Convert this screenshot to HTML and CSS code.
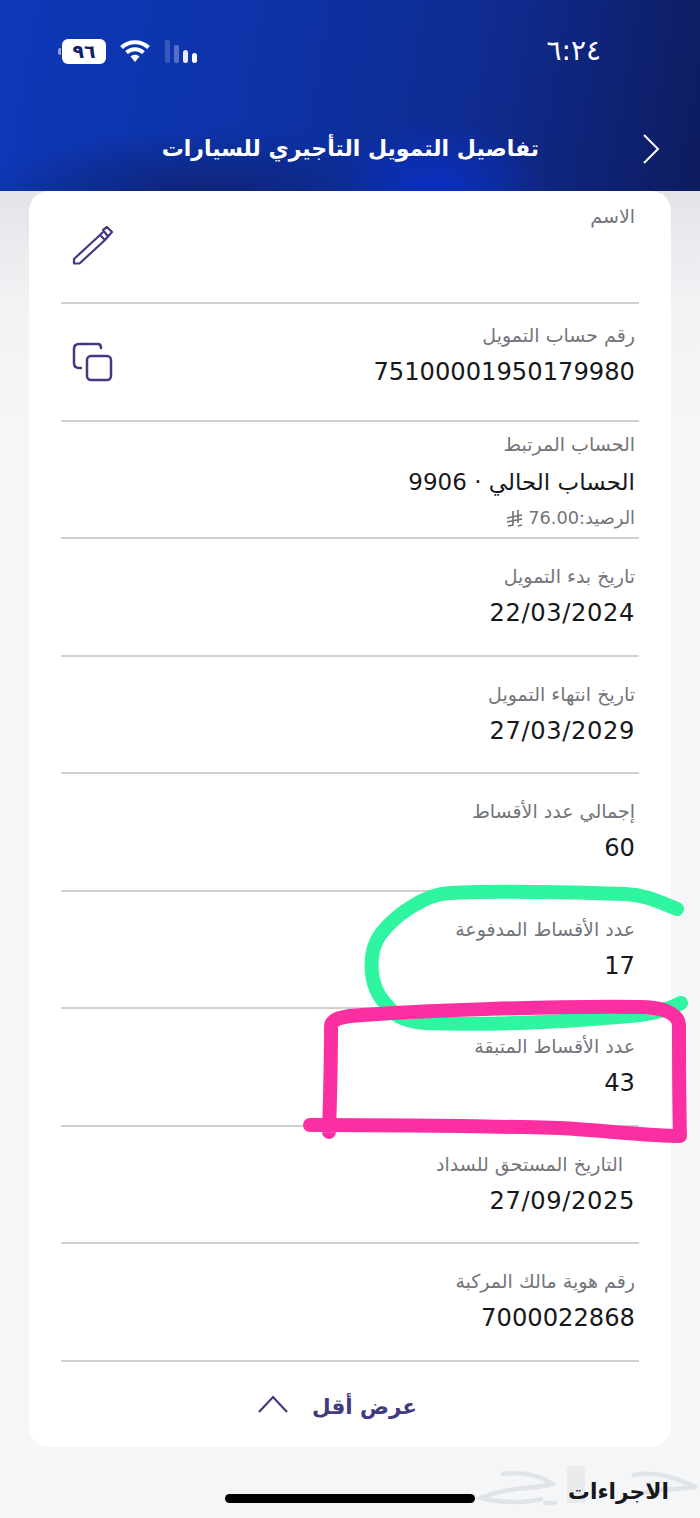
FILE: index.html
```html
<!DOCTYPE html>
<html lang="ar" dir="rtl">
<head>
<meta charset="utf-8">
<title>تفاصيل التمويل التأجيري للسيارات</title>
<link rel="stylesheet" href="styles.css">
</head>
<body>
<div class="screen">
  <header class="top">
    <div class="status">
      <span class="time">٦:٢٤</span>
      <div class="status-icons">
        <svg class="signal" width="36" height="26" viewBox="0 0 36 26"><rect x="1" y="2" width="5" height="23" rx="2" fill="#fff" opacity=".18"/><rect x="10" y="7" width="5" height="18" rx="2" fill="#fff" opacity=".3"/><rect x="19" y="12" width="5" height="13" rx="2.5" fill="#fff" opacity=".9"/><rect x="28" y="15" width="5" height="10" rx="2.5" fill="#fff"/></svg>
        <svg class="wifi" width="32" height="26" viewBox="0 0 32 26"><path d="M2.5 9.5C10 2.500 22 2.500 29.500 9.500M7.500 14.500C12.500 10 19.500 10 24.500 14.500" fill="none" stroke="#fff" stroke-width="4"/><path d="M11.500 18.500C14 16.300 18 16.300 20.500 18.500L16 24Z" fill="#fff"/></svg>
        <div class="battery"><span class="battery-level">٩٦</span><i class="battery-cap"></i></div>
      </div>
    </div>
    <div class="nav">
      <svg class="back" width="20" height="32" viewBox="0 0 20 32"><path d="M3 2L17 16L3 30" fill="none" stroke="#fff" stroke-width="2"/></svg>
      <h1 class="title">تفاصيل التمويل التأجيري للسيارات</h1>
    </div>
  </header>

  <main class="card">
    <section class="row row-name">
      <div class="info"><div class="label">الاسم</div></div>
      <svg class="icon" width="42" height="42" viewBox="0 0 42 42"><path d="M2 37.500V33L28 9L33 14L7.500 37.500ZM31 4L35 1L40 6L36 10.500ZM28 9L31 6M33 14L36 10.500" fill="none" stroke="#43397f" stroke-width="2.200" stroke-linejoin="round"/></svg>
    </section>
    <section class="row row-account">
      <div class="info"><div class="label">رقم حساب التمويل</div><div class="value">75100001950179980</div></div>
      <svg class="icon" width="42" height="42" viewBox="0 0 42 42"><path d="M14 3H7Q2 3 2 8V22Q2 27 7 27H9" fill="none" stroke="#43397f" stroke-width="2.500" stroke-linecap="round"/><path d="M14 3H26Q29 3 29 7" fill="none" stroke="#43397f" stroke-width="2.500" stroke-linecap="round"/><rect x="15" y="15" width="24" height="24" rx="4" fill="none" stroke="#43397f" stroke-width="2.500"/></svg>
    </section>
    <section class="row row-linked">
      <div class="info">
        <div class="label">الحساب المرتبط</div>
        <div class="value value-linked">الحساب الحالي · 9906</div>
        <div class="balance"><span>الرصيد:76.00</span><svg class="riyal" width="18" height="18" viewBox="0 0 18 18"><path d="M12 1V14M7 2V16L2 17M1 9L16 6M1 13L16 10M12 17L16 16" fill="none" stroke="#6f7177" stroke-width="1.600"/></svg></div>
      </div>
    </section>
    <section class="row"><div class="info"><div class="label">تاريخ بدء التمويل</div><div class="value value-date">22/03/2024</div></div></section>
    <section class="row"><div class="info"><div class="label">تاريخ انتهاء التمويل</div><div class="value value-date">27/03/2029</div></div></section>
    <section class="row"><div class="info"><div class="label">إجمالي عدد الأقساط</div><div class="value">60</div></div></section>
    <section class="row"><div class="info"><div class="label">عدد الأقساط المدفوعة</div><div class="value">17</div></div></section>
    <section class="row"><div class="info"><div class="label">عدد الأقساط المتبقة</div><div class="value">43</div></div></section>
    <section class="row"><div class="info"><div class="label label-indent">التاريخ المستحق للسداد</div><div class="value value-date">27/09/2025</div></div></section>
    <section class="row"><div class="info"><div class="label">رقم هوية مالك المركبة</div><div class="value">7000022868</div></div></section>
    <button class="less"><span class="less-text">عرض أقل</span><svg width="32" height="20" viewBox="0 0 32 20"><path d="M2 18L16 3L30 18" fill="none" stroke="#43397f" stroke-width="2.200"/></svg></button>
  </main>

  <svg class="watermark" width="222" height="42" viewBox="0 0 222 42"><g fill="none" stroke="#e1e4e7" stroke-width="4.500" stroke-linecap="round"><path d="M28 9C50 6 68 12 77 19C62 24 30 22 6 33C25 38 52 38 66 34"/><path d="M70 38H80"/><path d="M159 10C185 5 205 15 220 22C200 25 180 23 165 29"/></g><rect x="92" y="1" width="18" height="37" rx="3" fill="#e8eaec"/></svg>
  <h2 class="actions">الاجراءات</h2>
  <div class="home-bar"></div>

  <svg class="marks" width="700" height="1518" viewBox="0 0 700 1518">
    <path class="mark-green" d="M677 909C655 900 645 895 625 894C560 892 490 891 450 893C425 894 395 915 380 935C368 952 368 985 385 1003C395 1015 400 1021 425 1023C500 1026 590 1020 640 1015C655 1013 668 1010 681 1003"/>
    <path class="mark-pink" d="M331 1027C331 1020 338 1018 350 1016C420 1010 560 1006 640 1007C660 1007 678 1012 679 1025C679 1060 679 1100 680 1136C650 1136 600 1130 560 1128C480 1126 390 1125 310 1125M331 1027C331 1070 330 1100 329 1132"/>
  </svg>
</div>
</body>
</html>
```

FILE: styles.css
```css
* { box-sizing: border-box; }
html, body { margin: 0; padding: 0; }
body {
  width: 700px;
  height: 1518px;
  overflow: hidden;
  font-family: "DejaVu Sans", "Noto Sans", sans-serif;
}
.screen {
  position: relative;
  width: 700px;
  height: 1518px;
  overflow: hidden;
  background: linear-gradient(180deg, #e2e4e7 191px, #f0f2f4 300px, #f4f6f8 420px);
}
.top {
  height: 191px;
  padding-top: 37px;
  background:
    radial-gradient(ellipse 110px 70px at 435px 191px, #0a2fc0 0%, rgba(10, 47, 192, 0) 100%),
    radial-gradient(ellipse 220px 70px at 200px 200px, #0f2272 0%, rgba(15, 34, 114, 0) 100%),
    linear-gradient(100deg, #0e38b8 0%, #0c33a8 35%, #0f2b90 68%, #0e1c5e 100%);
  color: #fff;
}
.status {
  display: flex;
  justify-content: space-between;
  align-items: center;
  padding: 0 99px 0 62px;
  height: 28px;
}
.time { font-size: 28px; line-height: 28px; font-weight: 400; }
.status-icons { display: flex; direction: ltr; flex-direction: row-reverse; align-items: center; gap: 13px; }
.battery { position: relative; width: 44px; height: 25px; background: #fff; border-radius: 6px; display: flex; align-items: center; justify-content: center; }
.battery-level { color: #10206c; font-size: 19px; font-weight: 700; line-height: 25px; }
.battery-cap { position: absolute; left: -4px; top: 9px; width: 3px; height: 7px; border-radius: 2px 0 0 2px; background: #8fa2e0; }
.nav {
  display: flex;
  align-items: center;
  height: 34px;
  margin-top: 67px;
  padding-right: 39px;
  color: #fff;
}
.back { flex: none; }
.title {
  margin: 0 102px 0 0;
  font-size: 22px;
  font-weight: 700;
  line-height: 34px;
  white-space: nowrap;
}
.card {
  width: 642px;
  height: 1256px;
  margin: 0 29px;
  padding: 0 32px;
  background: #fff;
  border-radius: 20px;
}
.row {
  display: flex;
  justify-content: space-between;
  align-items: center;
  height: 117.55px;
  padding: 0 4px 0 11px;
  border-bottom: 2px solid #cfd0d2;
}
.info { flex: 1; align-self: flex-start; padding-top: 26px; }
.row-name { height: 113px; }
.row-name .info { padding-top: 14px; }
.row-account .info { padding-top: 20px; }
.row-linked .info { padding-top: 11px; }
.label { font-size: 19px; line-height: 22px; color: #73757b; white-space: nowrap; }
.label-indent { padding-right: 12px; }
.value {
  margin-top: 9px;
  font-size: 24.2px;
  line-height: 34px;
  color: #17181c;
  white-space: nowrap;
}
.value-date { letter-spacing: .6px; }
.value-linked { margin-top: 10px; font-size: 23px; }
.balance {
  display: flex;
  align-items: center;
  gap: 4px;
  margin-top: 8px;
  font-size: 17.8px;
  line-height: 22px;
  color: #73757b;
}
.riyal { flex: none; }
.icon { flex: none; }
.less {
  display: flex;
  width: 100%;
  height: 86px;
  align-items: center;
  justify-content: center;
  gap: 23px;
  padding: 0 26px 2px 0;
  border: 0;
  background: none;
  font-family: inherit;
  font-size: 21.5px;
  font-weight: 700;
  color: #43397f;
}
.less-text { padding-top: 6px; }
.actions {
  position: relative;
  margin: 29px 31px 0 0;
  font-size: 21.8px;
  font-weight: 700;
  line-height: 32px;
  color: #17181c;
}
.home-bar {
  position: absolute;
  left: 225px;
  top: 1494px;
  width: 250px;
  height: 9px;
  border-radius: 5px;
  background: #000;
}
.watermark { position: absolute; left: 475px; top: 1465px; }
.marks { position: absolute; left: 0; top: 0; pointer-events: none; }
.marks path { fill: none; stroke-width: 14; stroke-linecap: round; stroke-linejoin: round; }
.mark-green { stroke: #2ff5a1; }
.mark-pink { stroke: #fb2fa2; }
```
